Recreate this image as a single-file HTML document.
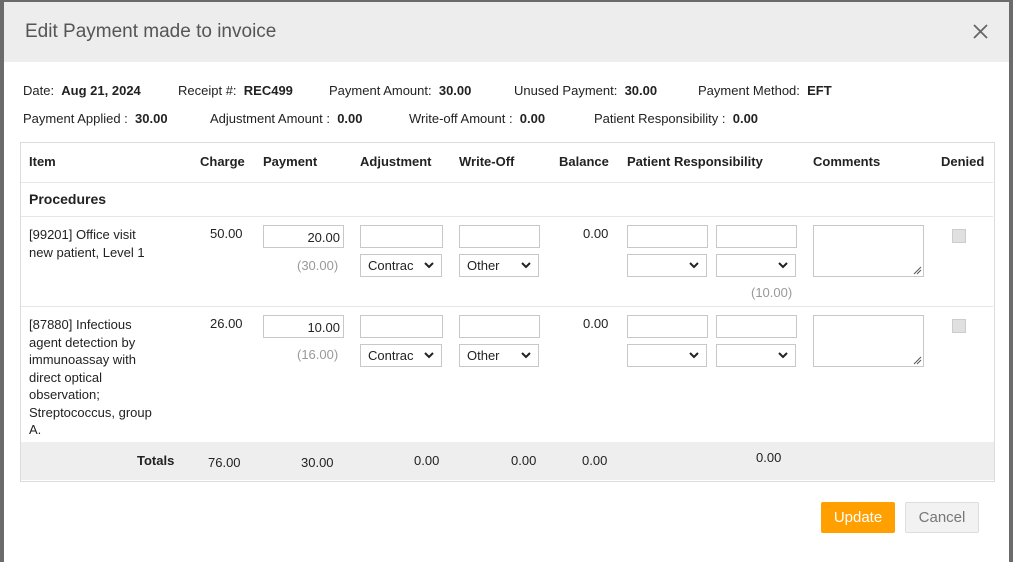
<!DOCTYPE html>
<html><head><style>
body{margin:0;width:1013px;height:557px;background:#6b6b6b;position:relative;overflow:hidden;font-family:"Liberation Sans",sans-serif;font-size:13px;color:#222}
.a{position:absolute;white-space:nowrap}
.m{position:absolute;left:4px;top:2px;width:1005px;height:560px;background:#fff}
.hd{position:absolute;left:4px;top:2px;width:1005px;height:60px;background:#ededed}
.in{position:absolute;border:1px solid #c8c8c8;background:#fff;box-sizing:border-box;height:23px}
.sel{position:absolute;border:1px solid #c8c8c8;background:#fff;box-sizing:border-box;height:23px;font-size:13px;padding:3px 0 0 7px}
.sel svg{position:absolute;right:7px;top:7px}
.ta{position:absolute;border:1px solid #c8c8c8;box-sizing:border-box;width:111px;height:52px}
.ta svg{position:absolute;right:1px;bottom:1px}
.cb{position:absolute;width:14px;height:14px;background:#e0e0e0;border:1px solid #ccc;box-sizing:border-box}
.b{font-weight:bold}
.g{color:#999}
.line{position:absolute;left:21px;width:972px;height:1px;background:#e6e6e6}
</style></head><body>
<div class="m"></div>
<div class="hd"></div>
<div class="a" style="left:25px;top:21px;font-size:19px;color:#555">Edit Payment made to invoice</div>
<svg class="a" style="left:973px;top:24px" width="15" height="15" viewBox="0 0 15 15"><path d="M1 1L14 14M14 1L1 14" stroke="#666" stroke-width="1.8"/></svg>

<div class="a" style="left:23px;top:83px">Date:&nbsp; <b>Aug 21, 2024</b></div>
<div class="a" style="left:178px;top:83px">Receipt #:&nbsp; <b>REC499</b></div>
<div class="a" style="left:329px;top:83px">Payment Amount:&nbsp; <b>30.00</b></div>
<div class="a" style="left:514px;top:83px">Unused Payment:&nbsp; <b>30.00</b></div>
<div class="a" style="left:698px;top:83px">Payment Method:&nbsp; <b>EFT</b></div>
<div class="a" style="left:23px;top:111px">Payment Applied :&nbsp; <b>30.00</b></div>
<div class="a" style="left:210px;top:111px">Adjustment Amount :&nbsp; <b>0.00</b></div>
<div class="a" style="left:409px;top:111px">Write-off Amount :&nbsp; <b>0.00</b></div>
<div class="a" style="left:594px;top:111px">Patient Responsibility :&nbsp; <b>0.00</b></div>

<div class="a" style="left:20px;top:142px;width:973px;height:338px;border:1px solid #dcdcdc"></div>
<div class="a" style="left:21px;top:442px;width:973px;height:38px;background:#eeeeee"></div>
<div class="line" style="top:182px"></div>
<div class="line" style="top:216px"></div>
<div class="line" style="top:306px"></div>

<div class="a b" style="left:29px;top:154px">Item</div>
<div class="a b" style="left:200px;top:154px">Charge</div>
<div class="a b" style="left:263px;top:154px">Payment</div>
<div class="a b" style="left:360px;top:154px">Adjustment</div>
<div class="a b" style="left:459px;top:154px">Write-Off</div>
<div class="a b" style="left:559px;top:154px">Balance</div>
<div class="a b" style="left:627px;top:154px">Patient Responsibility</div>
<div class="a b" style="left:813px;top:154px">Comments</div>
<div class="a b" style="left:941px;top:154px">Denied</div>
<div class="a b" style="left:29px;top:191px;font-size:14px">Procedures</div>

<div class="a" style="left:29px;top:226px;line-height:17.5px">[99201] Office visit<br>new patient, Level 1</div>
<div class="a" style="left:210px;top:226px">50.00</div>
<div class="in" style="left:263px;top:225px;width:81px;text-align:right;padding:4px 3px 0 0">20.00</div>
<div class="a g" style="left:297px;top:258px">(30.00)</div>
<div class="in" style="left:360px;top:225px;width:83px"></div>
<div class="sel" style="left:360px;top:254px;width:82px">Contrac<svg width="10" height="7"><path d="M1 1L5 5L9 1" stroke="#222" stroke-width="2" fill="none"/></svg></div>
<div class="in" style="left:459px;top:225px;width:81px"></div>
<div class="sel" style="left:459px;top:254px;width:80px">Other<svg width="10" height="7"><path d="M1 1L5 5L9 1" stroke="#222" stroke-width="2" fill="none"/></svg></div>
<div class="a" style="left:583px;top:226px">0.00</div>
<div class="in" style="left:627px;top:225px;width:81px"></div>
<div class="in" style="left:716px;top:225px;width:81px"></div>
<div class="sel" style="left:627px;top:254px;width:80px"><svg width="10" height="7"><path d="M1 1L5 5L9 1" stroke="#222" stroke-width="2" fill="none"/></svg></div>
<div class="sel" style="left:716px;top:254px;width:80px"><svg width="10" height="7"><path d="M1 1L5 5L9 1" stroke="#222" stroke-width="2" fill="none"/></svg></div>
<div class="a g" style="left:751px;top:285px">(10.00)</div>
<div class="ta" style="left:813px;top:225px"><svg width="9" height="9"><path d="M1 8L8 1M4 8L8 4" stroke="#555" stroke-width="1"/></svg></div>
<div class="cb" style="left:952px;top:229px"></div>

<div class="a" style="left:29px;top:316px;line-height:17.5px">[87880] Infectious<br>agent detection by<br>immunoassay with<br>direct optical<br>observation;<br>Streptococcus, group<br>A.</div>
<div class="a" style="left:210px;top:316px">26.00</div>
<div class="in" style="left:263px;top:315px;width:81px;text-align:right;padding:4px 3px 0 0">10.00</div>
<div class="a g" style="left:297px;top:347px">(16.00)</div>
<div class="in" style="left:360px;top:315px;width:83px"></div>
<div class="sel" style="left:360px;top:344px;width:82px">Contrac<svg width="10" height="7"><path d="M1 1L5 5L9 1" stroke="#222" stroke-width="2" fill="none"/></svg></div>
<div class="in" style="left:459px;top:315px;width:81px"></div>
<div class="sel" style="left:459px;top:344px;width:80px">Other<svg width="10" height="7"><path d="M1 1L5 5L9 1" stroke="#222" stroke-width="2" fill="none"/></svg></div>
<div class="a" style="left:583px;top:316px">0.00</div>
<div class="in" style="left:627px;top:315px;width:81px"></div>
<div class="in" style="left:716px;top:315px;width:81px"></div>
<div class="sel" style="left:627px;top:344px;width:80px"><svg width="10" height="7"><path d="M1 1L5 5L9 1" stroke="#222" stroke-width="2" fill="none"/></svg></div>
<div class="sel" style="left:716px;top:344px;width:80px"><svg width="10" height="7"><path d="M1 1L5 5L9 1" stroke="#222" stroke-width="2" fill="none"/></svg></div>
<div class="ta" style="left:813px;top:315px"><svg width="9" height="9"><path d="M1 8L8 1M4 8L8 4" stroke="#555" stroke-width="1"/></svg></div>
<div class="cb" style="left:952px;top:319px"></div>

<div class="a b" style="left:137px;top:453px">Totals</div>
<div class="a" style="left:208px;top:455px">76.00</div>
<div class="a" style="left:301px;top:455px">30.00</div>
<div class="a" style="left:414px;top:453px">0.00</div>
<div class="a" style="left:511px;top:453px">0.00</div>
<div class="a" style="left:582px;top:453px">0.00</div>
<div class="a" style="left:756px;top:450px">0.00</div>

<div class="a" style="left:821px;top:502px;width:74px;height:31px;background:#ffa000;border-radius:2px;color:#fff;font-size:15px;text-align:center;line-height:31px">Update</div>
<div class="a" style="left:905px;top:502px;width:72px;height:29px;background:#f2f2f2;border:1px solid #ddd;border-radius:2px;color:#777;font-size:15px;text-align:center;line-height:29px">Cancel</div>
</body></html>
